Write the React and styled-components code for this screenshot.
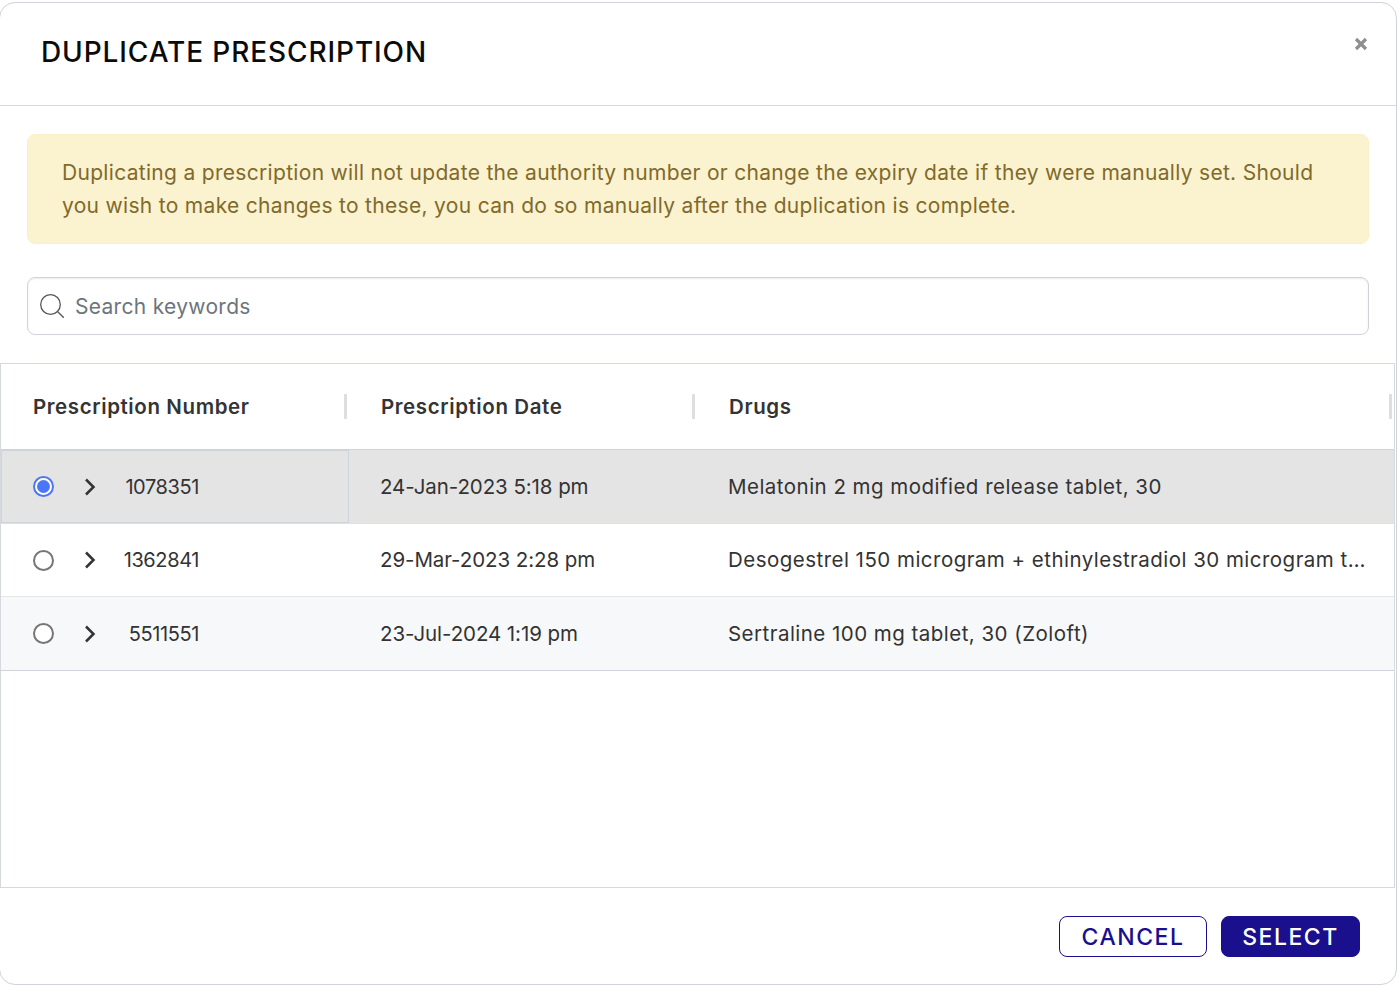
import React from "react";
import styled, { createGlobalStyle } from "styled-components";

const GlobalStyle = createGlobalStyle`
  *, *::before, *::after { box-sizing: border-box; }
  html, body { margin: 0; padding: 0; background: #fff; }
  body { font-family: "Inter", "Liberation Sans", sans-serif; color: #333; }
`;

const Page = styled.div`
  height: 987px;
  padding: 2px 2px 2px 0;
  overflow: hidden;
`;

const Modal = styled.div`
  height: 983px;
  margin-left: -1px;
  border: 1px solid #ced4da;
  border-radius: 16px;
  display: flex;
  flex-direction: column;
  overflow: hidden;
  background: #fff;
`;

const Header = styled.header`
  height: 103px;
  flex: none;
  border-bottom: 1px solid #d5d8dc;
  display: flex;
  justify-content: space-between;
  align-items: flex-start;
  padding: 32px 27px 0 41px;
`;

const Title = styled.h1`
  margin: 0;
  font-size: 28px;
  line-height: 34px;
  font-weight: 500;
  color: #0b0b0b;
  letter-spacing: 0.9px;
`;

const Close = styled.button`
  border: 0;
  background: none;
  padding: 0;
  margin-top: 1px;
  width: 16px;
  height: 16px;
  color: #8f8f8f;
  display: flex;
`;

const Body = styled.div`
  flex: none;
  padding: 28px 27px 28px 27px;
  display: flex;
  flex-direction: column;
  gap: 33px;
`;

const Alert = styled.div`
  height: 110px;
  background: #fbf2d0;
  border: 1px solid #faefc9;
  border-radius: 8px;
  padding: 21px 34px 0;
  color: #7f6a2b;
  font-size: 21px;
  line-height: 33px;
  letter-spacing: 0.31px;
`;

const Search = styled.label`
  height: 58px;
  border: 1px solid #ced4da;
  border-radius: 8px;
  box-shadow: inset 0 1px 2px rgba(0, 0, 0, 0.08);
  display: flex;
  align-items: center;
  gap: 11px;
  padding: 0 12px;
  color: #6c757d;
  font-size: 21px;
  letter-spacing: 0.3px;
`;

const SearchInput = styled.input`
  flex: 1;
  border: 0;
  outline: 0;
  padding: 0;
  background: none;
  font: inherit;
  letter-spacing: inherit;
  color: inherit;
  &::placeholder { color: #6c757d; opacity: 1; }
`;

const Table = styled.div`
  height: 525px;
  flex: none;
  margin-right: 1px;
  border-top: 1px solid #d5d8dc;
  border-bottom: 1px solid #d5d8dc;
  border-right: 1px solid #d5d8dc;
  border-left: 1px solid #d5d8dc;
`;

const Row = styled.div`
  display: grid;
  grid-template-columns: 348px 348px 1fr;
  height: ${(p) => p.$h}px;
  align-items: stretch;
  background: ${(p) => p.$bg || "#fff"};
  border-bottom: 1px solid ${(p) => p.$line || "#dee2e6"};
  color: #333;
`;

const HeadCell = styled.div`
  position: relative;
  display: flex;
  align-items: center;
  padding: 0 0 1px 32px;
  font-size: 20.5px;
  font-weight: 600;
  letter-spacing: 0.6px;
  color: #343434;
  &::after {
    content: "";
    position: absolute;
    right: ${(p) => p.$right ?? 2}px;
    top: 30px;
    width: 3px;
    height: 25px;
    background: #dedede;
  }
`;

const NumberCell = styled.div`
  display: flex;
  align-items: center;
  padding-left: 32px;
  font-size: 20px;
  ${(p) => p.$selected && "border: 1px solid #ced4da; padding-left: 31px;"}
`;

const Cell = styled.div`
  display: flex;
  align-items: center;
  padding: 0 25px 1px 31px;
  font-size: 20.5px;
  min-width: 0;
  letter-spacing: ${(p) => p.$spacing}px;
`;

const CellText = styled.span`
  overflow: hidden;
  white-space: nowrap;
  text-overflow: ellipsis;
`;

const Radio = styled.span`
  width: 21px;
  height: 21px;
  flex: none;
  border-radius: 50%;
  background: #fff;
  border: ${(p) => (p.$on ? "2px solid #4b76f7" : "2px solid #767676")};
  display: flex;
  align-items: center;
  justify-content: center;
  &::after {
    content: "";
    display: ${(p) => (p.$on ? "block" : "none")};
    width: 13px;
    height: 13px;
    border-radius: 50%;
    background: #4b76f7;
  }
`;

const Chevron = styled.svg`
  width: 12px;
  height: 18px;
  margin-left: 30px;
  flex: none;
`;

const RxNumber = styled.span`
  width: 90px;
  margin-left: 13px;
  text-align: right;
  letter-spacing: -0.4px;
`;

const Footer = styled.footer`
  flex: 1;
  display: flex;
  justify-content: flex-end;
  gap: 14px;
  padding: 28px 36px 0 0;
`;

const Button = styled.button`
  width: ${(p) => p.$w}px;
  height: 41px;
  border-radius: 8px;
  border: 1px solid #1a0f8c;
  background: ${(p) => (p.$primary ? "#1a0f8c" : "#fff")};
  color: ${(p) => (p.$primary ? "#fff" : "#1a0f8c")};
  font-family: inherit;
  font-size: 23px;
  font-weight: 550;
  letter-spacing: 1.5px;
  padding: 0;
`;

const rows = [
  { n: "1078351", date: "24-Jan-2023 5:18 pm", drug: "Melatonin 2 mg modified release tablet, 30", h: 74, selected: true, bg: "#e4e4e4", line: "#dee2e6" },
  { n: "1362841", date: "29-Mar-2023 2:28 pm", drug: "Desogestrel 150 microgram + ethinylestradiol 30 microgram tablet, 84", h: 73, bg: "#fff", line: "#e4e6e9" },
  { n: "5511551", date: "23-Jul-2024 1:19 pm", drug: "Sertraline 100 mg tablet, 30 (Zoloft)", h: 74, bg: "#f6f8fa", line: "#ced4da" },
];

export default function App() {
  return (
    <Page>
      <GlobalStyle />
      <Modal>
        <Header>
          <Title>DUPLICATE PRESCRIPTION</Title>
          <Close aria-label="Close">
            <svg viewBox="0 0 16 16" width="16" height="16">
              <path d="M3 3l10 10M13 3L3 13" stroke="currentColor" strokeWidth="3.2" />
            </svg>
          </Close>
        </Header>
        <Body>
          <Alert>
            Duplicating a prescription will not update the authority number or change the expiry date if they were manually set. Should you wish to make changes to these, you can do so manually after the duplication is complete.
          </Alert>
          <Search>
            <svg viewBox="0 0 24 24" width="24" height="24" fill="none" stroke="#555" strokeWidth="1.3">
              <circle cx="10.5" cy="10.5" r="9.8" />
              <path d="M17.5 17.5l6.3 6.3" />
            </svg>
            <SearchInput placeholder="Search keywords" />
          </Search>
        </Body>
        <Table>
          <Row $h={86} $line="#ced4da">
            <HeadCell>Prescription Number</HeadCell>
            <HeadCell>Prescription Date</HeadCell>
            <HeadCell $right={2}>Drugs</HeadCell>
          </Row>
          {rows.map((r) => (
            <Row key={r.n} $h={r.h} $bg={r.bg} $line={r.line}>
              <NumberCell $selected={r.selected}>
                <Radio $on={r.selected} />
                <Chevron viewBox="0 0 12 18" fill="none" stroke="#333" strokeWidth="2.5">
                  <path d="M2 1.5l7.5 7.5L2 16.5" />
                </Chevron>
                <RxNumber>{r.n}</RxNumber>
              </NumberCell>
              <Cell $spacing={-0.08}><CellText>{r.date}</CellText></Cell>
              <Cell $spacing={0.47}><CellText>{r.drug}</CellText></Cell>
            </Row>
          ))}
        </Table>
        <Footer>
          <Button $w={148}>CANCEL</Button>
          <Button $w={139} $primary>SELECT</Button>
        </Footer>
      </Modal>
    </Page>
  );
}
